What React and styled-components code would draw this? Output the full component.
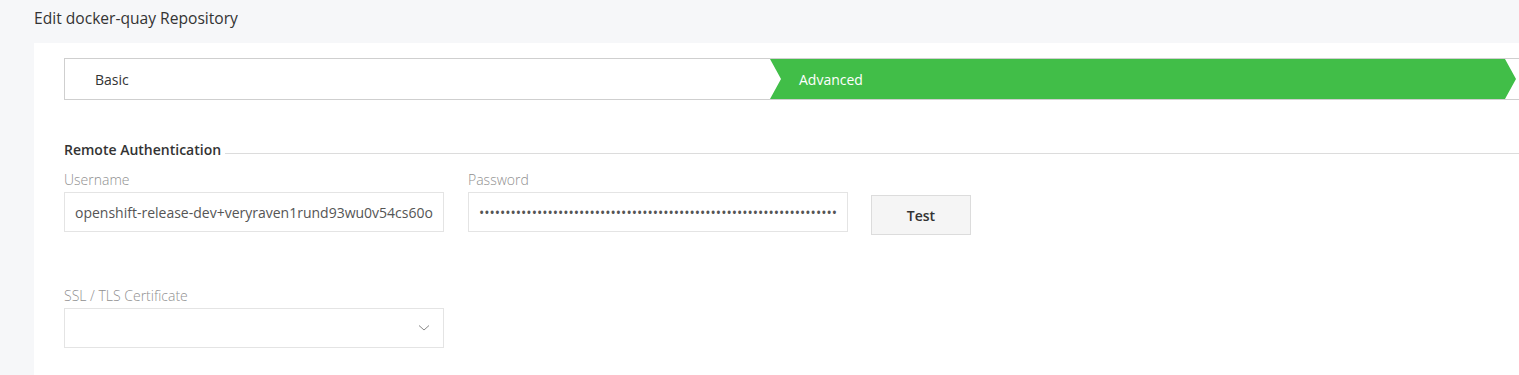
import React from "react";
import styled, { createGlobalStyle } from "styled-components";

const Global = createGlobalStyle`
  html, body { margin: 0; padding: 0; }
  body {
    background: #f6f7f9;
    font-family: "Open Sans", "Noto Sans", sans-serif;
    color: #333;
    overflow: hidden;
    width: 1519px;
  }
`;

const Page = styled.div`
  padding: 8px 0 0 34px;
`;

const Title = styled.h1`
  margin: 0 0 15px;
  font-size: 15.6px;
  font-weight: 400;
  line-height: 20px;
  color: #333;
`;

const Card = styled.div`
  background: #fff;
  width: 1560px;
  min-height: 340px;
  padding: 15px 30px;
  box-sizing: border-box;
`;

const Wizard = styled.div`
  display: flex;
  height: 40px;
  width: 1520px;
  border: 1px solid #cfcfcf;
  border-right: none;
  margin-bottom: 40px;
`;

const Step = styled.div`
  display: flex;
  align-items: center;
  flex: 0 0 ${(p) => p.$width}px;
  padding-left: ${(p) => (p.$active ? 29 : 30)}px;
  box-sizing: border-box;
  font-size: 14px;
  color: ${(p) => (p.$active ? "#fff" : "#333")};
  background: ${(p) => (p.$active ? "#41be48" : "#fff")};
  clip-path: ${(p) =>
    p.$active
      ? "polygon(0 0, calc(100% - 11px) 0, 100% 50%, calc(100% - 11px) 100%, 0 100%, 11px 50%)"
      : "none"};
`;

const Section = styled.div`
  display: flex;
  align-items: center;
  gap: 4px;
  font-size: 14px;
  font-weight: 600;
  color: #333;
  margin-bottom: 11px;
  &::after {
    content: "";
    flex: 1;
    height: 1px;
    background: #dcdcdc;
    margin-top: 8px;
  }
`;

const Row = styled.div`
  display: flex;
  align-items: flex-start;
  gap: 24px;
  margin-bottom: ${(p) => p.$mb || 0}px;
`;

const Field = styled.div`
  display: flex;
  flex-direction: column;
  width: 380px;
`;

const Label = styled.label`
  font-size: 14px;
  font-weight: 300;
  color: #8f8f8f;
  line-height: 20px;
  margin-bottom: 2px;
`;

const Input = styled.div`
  height: 40px;
  box-sizing: border-box;
  border: 1px solid #e4e4e4;
  display: flex;
  align-items: center;
  padding: 0 13px 0 10px;
  font-size: 14px;
  color: #555;
  white-space: nowrap;
  overflow: hidden;
  justify-content: space-between;
`;

const Button = styled.button`
  margin-top: 25px;
  margin-left: -1px;
  width: 100px;
  height: 40px;
  background: #f5f5f5;
  border: 1px solid #dcdcdc;
  font-family: inherit;
  font-size: 14px;
  font-weight: 600;
  color: #333;
`;

export default function App() {
  return (
    <>
      <Global />
      <Page>
        <Title>Edit docker-quay Repository</Title>
        <Card>
          <Wizard>
            <Step $width={705}>Basic</Step>
            <Step $width={746} $active>
              Advanced
            </Step>
          </Wizard>
          <Section>Remote Authentication</Section>
          <Row $mb={51}>
            <Field>
              <Label>Username</Label>
              <Input>openshift-release-dev+veryraven1rund93wu0v54cs60o</Input>
            </Field>
            <Field>
              <Label>Password</Label>
              <Input>{"•".repeat(68)}</Input>
            </Field>
            <Button>Test</Button>
          </Row>
          <Row>
            <Field>
              <Label>SSL / TLS Certificate</Label>
              <Input>
                <span />
                <svg width="12" height="8" viewBox="0 0 12 8" fill="none" stroke="#888" strokeWidth="1">
                  <path d="M1 1.5 L6 6 L11 1.5" />
                </svg>
              </Input>
            </Field>
          </Row>
        </Card>
      </Page>
    </>
  );
}
